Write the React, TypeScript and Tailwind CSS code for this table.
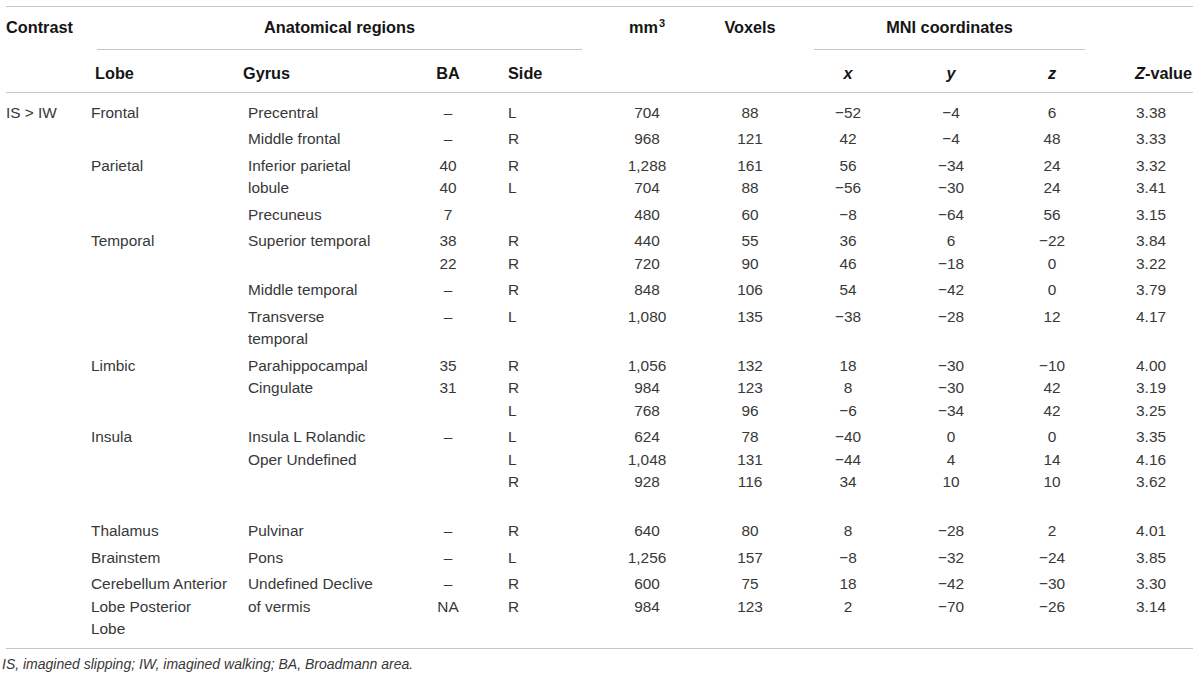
import React from "react";

type Row = {
  lines: number;
  cells: string[][];
};

const M = "\u2212";
const D = "\u2013";

const rows: Row[] = [
  { lines: 1, cells: [["IS > IW"], ["Frontal"], ["Precentral"], [D], ["L"], ["704"], ["88"], [M + "52"], [M + "4"], ["6"], ["3.38"]] },
  { lines: 1, cells: [[], [], ["Middle frontal"], [D], ["R"], ["968"], ["121"], ["42"], [M + "4"], ["48"], ["3.33"]] },
  { lines: 2, cells: [[], ["Parietal"], ["Inferior parietal", "lobule"], ["40", "40"], ["R", "L"], ["1,288", "704"], ["161", "88"], ["56", M + "56"], [M + "34", M + "30"], ["24", "24"], ["3.32", "3.41"]] },
  { lines: 1, cells: [[], [], ["Precuneus"], ["7"], [], ["480"], ["60"], [M + "8"], [M + "64"], ["56"], ["3.15"]] },
  { lines: 2, cells: [[], ["Temporal"], ["Superior temporal"], ["38", "22"], ["R", "R"], ["440", "720"], ["55", "90"], ["36", "46"], ["6", M + "18"], [M + "22", "0"], ["3.84", "3.22"]] },
  { lines: 1, cells: [[], [], ["Middle temporal"], [D], ["R"], ["848"], ["106"], ["54"], [M + "42"], ["0"], ["3.79"]] },
  { lines: 2, cells: [[], [], ["Transverse", "temporal"], [D], ["L"], ["1,080"], ["135"], [M + "38"], [M + "28"], ["12"], ["4.17"]] },
  { lines: 3, cells: [[], ["Limbic"], ["Parahippocampal", "Cingulate"], ["35", "31"], ["R", "R", "L"], ["1,056", "984", "768"], ["132", "123", "96"], ["18", "8", M + "6"], [M + "30", M + "30", M + "34"], [M + "10", "42", "42"], ["4.00", "3.19", "3.25"]] },
  { lines: 4, cells: [[], ["Insula"], ["Insula L Rolandic", "Oper Undefined"], [D], ["L", "L", "R"], ["624", "1,048", "928"], ["78", "131", "116"], [M + "40", M + "44", "34"], ["0", "4", "10"], ["0", "14", "10"], ["3.35", "4.16", "3.62"]] },
  { lines: 1, cells: [[], ["Thalamus"], ["Pulvinar"], [D], ["R"], ["640"], ["80"], ["8"], [M + "28"], ["2"], ["4.01"]] },
  { lines: 1, cells: [[], ["Brainstem"], ["Pons"], [D], ["L"], ["1,256"], ["157"], [M + "8"], [M + "32"], [M + "24"], ["3.85"]] },
  { lines: 3, cells: [[], ["Cerebellum Anterior", "Lobe Posterior", "Lobe"], ["Undefined Declive", "of vermis"], [D, "NA"], ["R", "R"], ["600", "984"], ["75", "123"], ["18", "2"], [M + "42", M + "70"], [M + "30", M + "26"], ["3.30", "3.14"]] },
];

const widths = [85, 157, 170, 60, 122, 94, 112, 84, 122, 80, 101];

const colAlign = [
  "text-left",
  "text-left",
  "text-left",
  "text-center",
  "text-left pl-[30px]",
  "text-center",
  "text-center",
  "text-center",
  "text-center",
  "text-center",
  "text-right pr-[27px]",
];

const h2 = "p-0 pt-[12px] pb-[8px] border-b border-[#c6c6c6] align-top";

function H2({ children, className = "" }: { children?: React.ReactNode; className?: string }) {
  return <div className={`h-[22px] leading-[22px] overflow-visible whitespace-nowrap ${className}`}>{children ?? "\u00a0"}</div>;
}

export default function App() {
  return (
    <div
      className="w-[1200px] h-[679px] bg-white text-[#383838] overflow-hidden"
      style={{ fontFamily: '"Liberation Sans", Arial, sans-serif' }}
    >
      <div className="ml-[6px] mt-[6px] w-[1187px] border-t border-[#c6c6c6]">
        <table className="table-fixed border-separate border-spacing-0 w-[1187px] text-[15.4px]">
          <colgroup>
            {widths.map((w, i) => (
              <col key={i} style={{ width: w }} />
            ))}
          </colgroup>
          <thead className="text-[16.3px]">
            <tr className="font-bold text-[#151515]">
              <td className="p-0 pt-[9px] pb-[12px] text-left align-top">
                <H2>Contrast</H2>
              </td>
              <td colSpan={4} className="p-0 align-top">
                <div className="ml-[6px] mr-[18px] pt-[9px] pb-[11px] text-center border-b border-[#c6c6c6]">
                  <H2>Anatomical regions</H2>
                </div>
              </td>
              <td className="p-0 pt-[9px] pb-[12px] text-center align-top">
                <H2>
                  mm<span className="text-[11px] relative -top-[6px] ml-[1px]">3</span>
                </H2>
              </td>
              <td className="p-0 pt-[9px] pb-[12px] text-center align-top">
                <H2>Voxels</H2>
              </td>
              <td colSpan={3} className="p-0 align-top">
                <div className="ml-[8px] mr-[7px] pt-[9px] pb-[11px] text-center border-b border-[#c6c6c6]">
                  <H2>MNI coordinates</H2>
                </div>
              </td>
              <td className="p-0" />
            </tr>
            <tr className="font-bold text-[#151515]">
              <td className={h2}>
                <H2 />
              </td>
              <td className={`${h2} text-left pl-[4px]`}>
                <H2>Lobe</H2>
              </td>
              <td className={`${h2} text-left`}>
                <H2>
                  <span className="relative -left-[5px]">Gyrus</span>
                </H2>
              </td>
              <td className={`${h2} text-center`}>
                <H2>BA</H2>
              </td>
              <td className={`${h2} text-left pl-[30px]`}>
                <H2>Side</H2>
              </td>
              <td className={h2}>
                <H2 />
              </td>
              <td className={h2}>
                <H2 />
              </td>
              <td className={`${h2} text-center`}>
                <H2 className="italic">x</H2>
              </td>
              <td className={`${h2} text-center`}>
                <H2 className="italic">y</H2>
              </td>
              <td className={`${h2} text-center`}>
                <H2 className="italic">z</H2>
              </td>
              <td className={`${h2} text-right pr-[1px]`}>
                <H2>
                  <span className="italic">Z</span>-value
                </H2>
              </td>
            </tr>
          </thead>
          <tbody>
            {rows.map((r, ri) => {
              const first = ri === 0;
              const last = ri === rows.length - 1;
              const pad = first
                ? "pt-[8.75px] pb-[2px]"
                : last
                ? "pt-[2px] pb-[7px] border-b border-[#c6c6c6]"
                : "pt-[2px] pb-[2px]";
              return (
                <tr key={ri}>
                  {r.cells.map((c, ci) => (
                    <td key={ci} className={`p-0 align-top whitespace-nowrap ${pad} ${colAlign[ci]}`}>
                      {Array.from({ length: r.lines }).map((_, li) => (
                        <div key={li} className="h-[22.5px] leading-[22.5px]">
                          {c[li] ?? "\u00a0"}
                        </div>
                      ))}
                    </td>
                  ))}
                </tr>
              );
            })}
          </tbody>
        </table>
        <div className="-ml-[4px] mt-[4px] leading-[22px] italic text-[14px] text-[#383838]">
          IS, imagined slipping; IW, imagined walking; BA, Broadmann area.
        </div>
      </div>
    </div>
  );
}
